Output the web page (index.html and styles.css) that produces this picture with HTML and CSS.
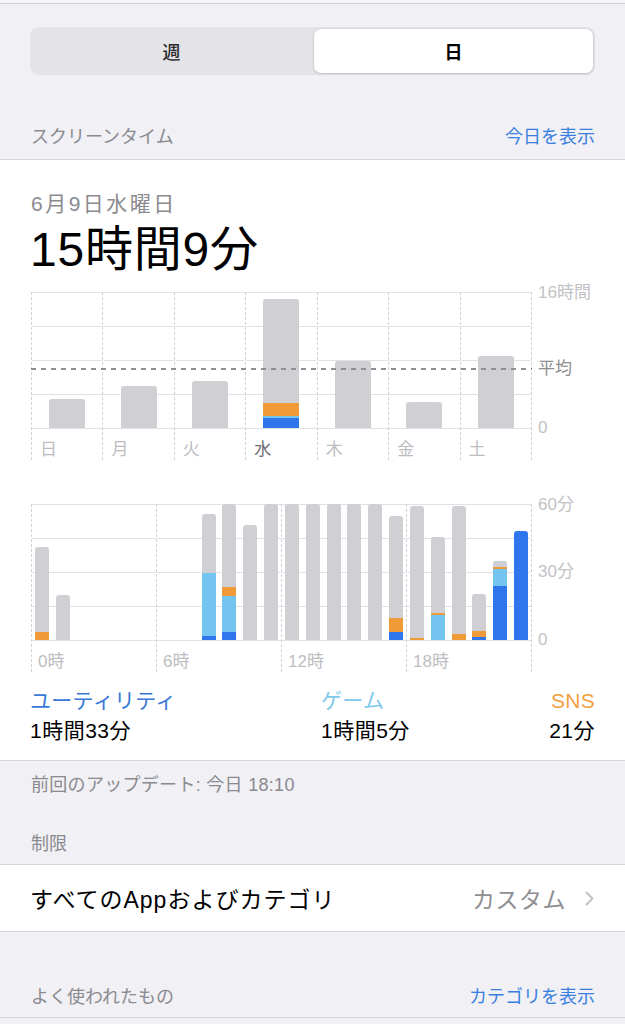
FILE: index.html
```html
<!DOCTYPE html>
<html lang="ja">
<head>
<meta charset="utf-8">
<title>スクリーンタイム</title>
<link rel="stylesheet" href="styles.css">
</head>
<body>
<div class="topbar"></div>

<div class="segmented">
  <div class="seg">週</div>
  <div class="seg active">日</div>
</div>

<div class="group-header first">
  <span>スクリーンタイム</span>
  <span class="link">今日を表示</span>
</div>

<section class="card">
  <div class="date">6月9日水曜日</div>
  <div class="total">15時間9分</div>

  <div class="chart week">
    <div class="plot">
      <div class="cols">
        <div class="col"><div class="area"><div class="bar" style="height:29px"><i class="g"></i></div></div><div class="lab">日</div></div>
        <div class="col"><div class="area"><div class="bar" style="height:42px"><i class="g"></i></div></div><div class="lab">月</div></div>
        <div class="col"><div class="area"><div class="bar" style="height:47px"><i class="g"></i></div></div><div class="lab">火</div></div>
        <div class="col"><div class="area"><div class="bar" style="height:129px"><i class="g"></i><i class="o" style="height:13px"></i><i class="l" style="height:2px"></i><i class="b" style="height:10px"></i></div></div><div class="lab cur">水</div></div>
        <div class="col"><div class="area"><div class="bar" style="height:67px"><i class="g"></i></div></div><div class="lab">木</div></div>
        <div class="col"><div class="area"><div class="bar" style="height:26px"><i class="g"></i></div></div><div class="lab">金</div></div>
        <div class="col"><div class="area"><div class="bar" style="height:72px"><i class="g"></i></div></div><div class="lab">土</div></div>
      </div>
      <div class="avg"></div>
    </div>
    <div class="axis">
      <span class="tick t-top">16時間</span>
      <span class="tick t-avg">平均</span>
      <span class="tick t-zero">0</span>
    </div>
  </div>

  <div class="chart hour">
    <div class="plot">
      <div class="cols">
        <div class="col">
          <div class="area">
            <div class="slot"><div class="bar" style="height:93px"><i class="g"></i><i class="o" style="height:8px"></i></div></div>
            <div class="slot"><div class="bar" style="height:45px"><i class="g"></i></div></div>
            <div class="slot"></div>
            <div class="slot"></div>
            <div class="slot"></div>
            <div class="slot"></div>
          </div>
          <div class="lab">0時</div>
        </div>
        <div class="col">
          <div class="area">
            <div class="slot"></div>
            <div class="slot"></div>
            <div class="slot"><div class="bar" style="height:126px"><i class="g"></i><i class="l" style="height:63px"></i><i class="b" style="height:4px"></i></div></div>
            <div class="slot"><div class="bar" style="height:136px"><i class="g"></i><i class="o" style="height:9px"></i><i class="l" style="height:36px"></i><i class="b" style="height:8px"></i></div></div>
            <div class="slot"><div class="bar" style="height:115px"><i class="g"></i></div></div>
            <div class="slot"><div class="bar" style="height:136px"><i class="g"></i></div></div>
          </div>
          <div class="lab">6時</div>
        </div>
        <div class="col">
          <div class="area">
            <div class="slot"><div class="bar" style="height:136px"><i class="g"></i></div></div>
            <div class="slot"><div class="bar" style="height:136px"><i class="g"></i></div></div>
            <div class="slot"><div class="bar" style="height:136px"><i class="g"></i></div></div>
            <div class="slot"><div class="bar" style="height:136px"><i class="g"></i></div></div>
            <div class="slot"><div class="bar" style="height:136px"><i class="g"></i></div></div>
            <div class="slot"><div class="bar" style="height:124px"><i class="g"></i><i class="o" style="height:14px"></i><i class="b" style="height:8px"></i></div></div>
          </div>
          <div class="lab">12時</div>
        </div>
        <div class="col">
          <div class="area">
            <div class="slot"><div class="bar" style="height:134px"><i class="g"></i><i class="o" style="height:2px"></i></div></div>
            <div class="slot"><div class="bar" style="height:103px"><i class="g"></i><i class="o" style="height:2px"></i><i class="l" style="height:25px"></i></div></div>
            <div class="slot"><div class="bar" style="height:134px"><i class="g"></i><i class="o" style="height:6px"></i></div></div>
            <div class="slot"><div class="bar" style="height:46px"><i class="g"></i><i class="o" style="height:6px"></i><i class="b" style="height:3px"></i></div></div>
            <div class="slot"><div class="bar" style="height:79px"><i class="g"></i><i class="o" style="height:2px"></i><i class="l" style="height:17px"></i><i class="b" style="height:54px"></i></div></div>
            <div class="slot"><div class="bar" style="height:109px"><i class="b" style="height:109px"></i></div></div>
          </div>
          <div class="lab">18時</div>
        </div>
      </div>
    </div>
    <div class="axis">
      <span class="tick t-top">60分</span>
      <span class="tick t-mid">30分</span>
      <span class="tick t-zero">0</span>
    </div>
  </div>

  <div class="legend">
    <div class="leg">
      <div class="leg-name util">ユーティリティ</div>
      <div class="leg-val">1時間33分</div>
    </div>
    <div class="leg">
      <div class="leg-name game">ゲーム</div>
      <div class="leg-val">1時間5分</div>
    </div>
    <div class="leg right">
      <div class="leg-name sns">SNS</div>
      <div class="leg-val">21分</div>
    </div>
  </div>
</section>

<div class="note">前回のアップデート: 今日 18:10</div>

<div class="group-header limits">
  <span>制限</span>
</div>

<div class="row">
  <span class="row-title">すべてのAppおよびカテゴリ</span>
  <span class="row-detail">カスタム
    <svg class="chev" width="9" height="15" viewBox="0 0 9 15"><polyline points="1.5,1.5 7.5,7.5 1.5,13.5" fill="none" stroke="#c4c4c8" stroke-width="2" stroke-linecap="round" stroke-linejoin="round"/></svg>
  </span>
</div>

<div class="group-header most">
  <span>よく使われたもの</span>
  <span class="link">カテゴリを表示</span>
</div>
</body>
</html>
```

FILE: styles.css
```css
* { box-sizing: border-box; }

html, body {
  margin: 0;
  padding: 0;
}

body {
  background: #f0f0f5;
  font-family: "Liberation Sans", "Noto Sans CJK JP", sans-serif;
  color: #000;
  width: 625px;
  overflow: hidden;
}

.topbar {
  height: 4px;
  background: #f6f6f8;
  border-bottom: 1px solid #cfcfd3;
}

/* segmented control */
.segmented {
  margin: 23px 30px 0 30px;
  height: 48px;
  background: #e3e3e8;
  border-radius: 9px;
  padding: 2px;
  display: grid;
  grid-template-columns: 1fr 1fr;
  gap: 3px;
}

.seg {
  display: flex;
  align-items: center;
  justify-content: center;
  font-size: 18px;
  font-weight: 500;
  color: #2c2c2e;
}

.seg.active {
  background: #fff;
  border-radius: 7px;
  font-weight: 700;
  color: #000;
  box-shadow: 0 1px 3px rgba(0, 0, 0, 0.14), 0 0 0 0.5px rgba(0, 0, 0, 0.05);
}

/* group headers */
.group-header {
  display: flex;
  justify-content: space-between;
  align-items: center;
  padding: 0 30px 0 31px;
  font-size: 18px;
  line-height: 24px;
  color: #8a8a8f;
  border-bottom: 1px solid #d6d6da;
}

.group-header.first {
  padding-top: 50px;
  padding-bottom: 10px;
}

.group-header.limits {
  padding-top: 35px;
  padding-bottom: 8px;
}

.group-header.most {
  padding-top: 53px;
  padding-bottom: 8px;
}

.link {
  color: #3a7fe0;
}

/* card */
.card {
  background: #fff;
  padding: 30px 30px 15px 30px;
  border-bottom: 1px solid #d6d6da;
}

.date {
  font-size: 21px;
  line-height: 28px;
  color: #8a8a8f;
  letter-spacing: 2.5px;
  padding-left: 1px;
}

.total {
  margin-top: 4px;
  font-size: 48px;
  line-height: 56px;
  letter-spacing: 0.8px;
}

/* charts */
.chart {
  display: grid;
  grid-template-columns: 501px 1fr;
  margin-left: 1px;
}

.chart.week { margin-top: 14px; }
.chart.hour { margin-top: 44px; }

.plot {
  position: relative;
}

.cols {
  display: grid;
  border-right: 1px dashed #d2d2d6;
}

.week .cols { grid-template-columns: repeat(7, 1fr); }
.hour .cols { grid-template-columns: repeat(4, 1fr); }

.col {
  border-left: 1px dashed #d2d2d6;
  display: flex;
  flex-direction: column;
}

.area {
  height: 137px;
  background-image: repeating-linear-gradient(to bottom, #e1e1e5 0, #e1e1e5 1px, transparent 1px, transparent 34px);
  display: flex;
  align-items: flex-end;
  justify-content: center;
  padding-bottom: 1px;
}

.hour .area {
  justify-content: stretch;
}

.slot {
  flex: 1;
  display: flex;
  justify-content: center;
  align-items: flex-end;
  height: 100%;
}

.bar {
  display: flex;
  flex-direction: column;
  border-radius: 3px 3px 0 0;
  overflow: hidden;
}

.week .bar { width: 36px; }
.hour .bar { width: 14px; }

.bar i { display: block; flex: none; }
.bar .g { flex: 1; background: #cfcfd4; }
.bar .o { background: #f09b38; }
.bar .l { background: #74c4f0; }
.bar .b { background: #2f75ee; }

.lab {
  font-size: 17px;
  line-height: 20px;
  color: #bdbdc1;
}

.week .lab {
  padding: 11px 0 0 8px;
}

.week .lab.cur {
  color: #6e6e73;
}

.hour .lab {
  padding: 11px 0 0 6px;
}

.avg {
  position: absolute;
  left: 0;
  right: 0;
  top: 76px;
  height: 2px;
  background-image: repeating-linear-gradient(to right, #8e8e93 0, #8e8e93 5px, transparent 5px, transparent 10px);
}

.axis {
  position: relative;
  padding-left: 6px;
}

.tick {
  position: absolute;
  left: 6px;
  font-size: 17px;
  line-height: 20px;
  color: #c2c2c6;
  white-space: nowrap;
}

.t-top { top: -9px; }
.t-avg { top: 67px; color: #8e8e93; }
.t-mid { top: 58px; }
.t-zero { top: 126px; }

/* legend */
.legend {
  margin-top: 15px;
  display: grid;
  grid-template-columns: 291px 1fr auto;
}

.leg-name, .leg-val {
  font-size: 21px;
  line-height: 28px;
}

.leg-name { letter-spacing: 0.3px; }

.leg-val { margin-top: 2px; letter-spacing: 0.5px; }

.leg.right { text-align: right; }

.util { color: #3a78d8; }
.game { color: #80c9ea; }
.sns { color: #f0a03c; }

/* bottom */
.note {
  padding: 12px 30px 0 31px;
  font-size: 18px;
  line-height: 24px;
  color: #8a8a8f;
  letter-spacing: 0.3px;
}

.row {
  background: #fff;
  height: 67px;
  border-bottom: 1px solid #d6d6da;
  display: flex;
  align-items: center;
  justify-content: space-between;
  padding: 0 31px 0 30px;
}

.row-title {
  font-size: 23px;
  letter-spacing: 1px;
}

.row-detail {
  font-size: 23px;
  color: #8e8e93;
  display: flex;
  align-items: center;
  gap: 19px;
  letter-spacing: 0.5px;
}
```
